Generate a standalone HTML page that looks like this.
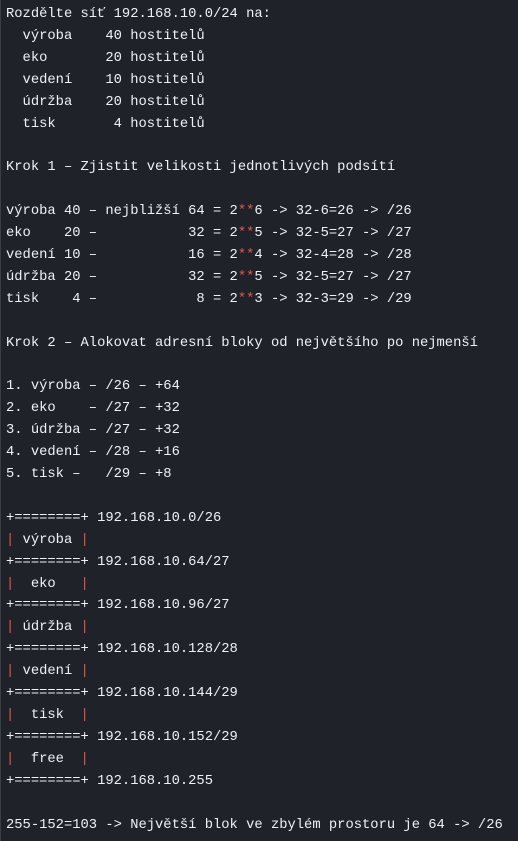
<!DOCTYPE html>
<html><head><meta charset="utf-8"><style>
html,body{margin:0;padding:0;background:#1f2329;width:518px;height:841px;overflow:hidden}
pre{margin:0;padding:4px 0 0 5px;font-family:"Liberation Mono","DejaVu Sans Mono",monospace;font-size:13.8px;line-height:21.9px;color:#eef2f6;white-space:pre}
.r{color:#e5534b}
body{border-left:1px solid #3a3f46;box-sizing:border-box}
</style></head><body><pre>Rozdělte síť 192.168.10.0/24 na:
  výroba    40 hostitelů
  eko       20 hostitelů
  vedení    10 hostitelů
  údržba    20 hostitelů
  tisk       4 hostitelů

Krok 1 – Zjistit velikosti jednotlivých podsítí

výroba 40 – nejbližší 64 = 2<span class="r">**</span>6 -&gt; 32-6=26 -&gt; /26
eko    20 –           32 = 2<span class="r">**</span>5 -&gt; 32-5=27 -&gt; /27
vedení 10 –           16 = 2<span class="r">**</span>4 -&gt; 32-4=28 -&gt; /28
údržba 20 –           32 = 2<span class="r">**</span>5 -&gt; 32-5=27 -&gt; /27
tisk    4 –            8 = 2<span class="r">**</span>3 -&gt; 32-3=29 -&gt; /29

Krok 2 – Alokovat adresní bloky od největšího po nejmenší

1. výroba – /26 – +64
2. eko    – /27 – +32
3. údržba – /27 – +32
4. vedení – /28 – +16
5. tisk –   /29 – +8

+========+ 192.168.10.0/26
<span class="r">|</span> výroba <span class="r">|</span>
+========+ 192.168.10.64/27
<span class="r">|</span>  eko   <span class="r">|</span>
+========+ 192.168.10.96/27
<span class="r">|</span> údržba <span class="r">|</span>
+========+ 192.168.10.128/28
<span class="r">|</span> vedení <span class="r">|</span>
+========+ 192.168.10.144/29
<span class="r">|</span>  tisk  <span class="r">|</span>
+========+ 192.168.10.152/29
<span class="r">|</span>  free  <span class="r">|</span>
+========+ 192.168.10.255

255-152=103 -&gt; Největší blok ve zbylém prostoru je 64 -&gt; /26</pre></body></html>
